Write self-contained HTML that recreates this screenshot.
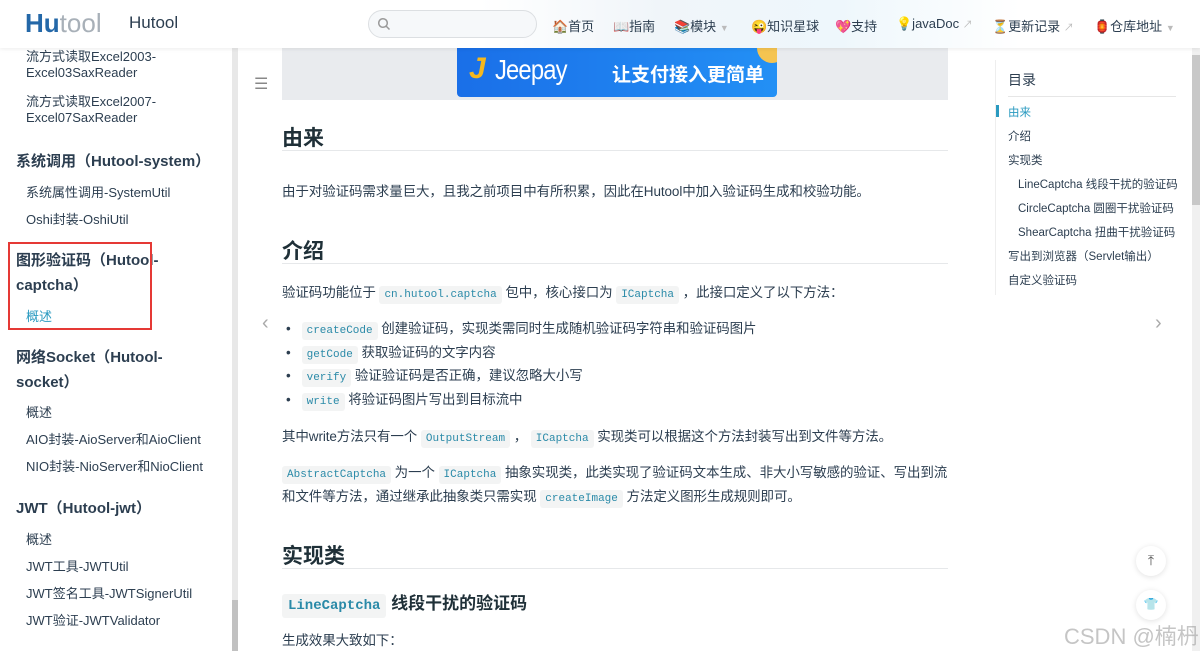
<!DOCTYPE html>
<html><head><meta charset="utf-8"><style>
*{margin:0;padding:0;box-sizing:border-box}
body{width:1200px;height:651px;overflow:hidden;background:#fff;font-family:"Liberation Sans","Noto Sans CJK SC",sans-serif;color:#2c3e50;position:relative}
.a{position:absolute;white-space:nowrap}
.s{font-size:13px;color:#2c3e50;left:26px}
.h{font-size:15px;font-weight:bold;color:#2c3e50;left:16px}
.m{font-size:13.5px;color:#2c3e50;letter-spacing:-0.1px}
code{font-family:"Liberation Mono",monospace;font-size:11px;color:#2a8aa8;background:#f3f4f4;padding:3px 5px;border-radius:3px;letter-spacing:0}
.h2{font-size:21px;font-weight:bold;color:#1f3038;left:282px}
.ln{position:absolute;left:282px;width:666px;height:1px;background:#e6e8ea}
.t{font-size:11.5px;color:#2c3e50;left:1008px}
.nav{font-size:13px;color:#2c3e50;top:16px}
</style></head><body>
<div class="a" style="left:0;top:0;width:1200px;height:48px;background:linear-gradient(90deg,#fff 0%,#fff 40%,#f0f5f9 55%,#eef7fc 70%,#fff 85%);box-shadow:0 1px 4px rgba(0,0,0,.08);z-index:5"></div>
<div class="a" style="left:25px;top:8px;font-size:26px;font-weight:bold;z-index:6"><span style="color:#2468a8">Hu</span><span style="color:#a8b0b8;font-weight:normal">tool</span></div>
<div class="a" style="left:129px;top:13px;font-size:17px;color:#2c3e50;z-index:6">Hutool</div>
<div class="a" style="left:368px;top:10px;width:169px;height:28px;border:1px solid #dcdfe2;border-radius:14px;background:#f6f8fa;z-index:6"><svg width="14" height="14" style="position:absolute;left:8px;top:6px"><circle cx="6" cy="6" r="4.3" stroke="#999" stroke-width="1.5" fill="none"/><path d="M9 9l3.5 3.5" stroke="#999" stroke-width="1.5"/></svg></div>
<div style="z-index:6;position:absolute;left:0;top:0">
<div class="a nav" style="left:552px">🏠首页</div>
<div class="a nav" style="left:613px">📖指南</div>
<div class="a nav" style="left:674px">📚模块 <span style="color:#bbb;font-size:9px">▼</span></div>
<div class="a nav" style="left:751px">😜知识星球</div>
<div class="a nav" style="left:835px">💖支持</div>
<div class="a nav" style="left:896px">💡javaDoc <span style="color:#bbb;font-size:10px">↗</span></div>
<div class="a nav" style="left:992px">⏳更新记录 <span style="color:#bbb;font-size:10px">↗</span></div>
<div class="a nav" style="left:1094px">🏮仓库地址 <span style="color:#bbb;font-size:9px">▼</span></div>
</div>
<div class="a" style="left:232px;top:0;width:6px;height:651px;background:#e8e8e8"></div>
<div class="a" style="left:232px;top:600px;width:6px;height:51px;background:#c1c1c1"></div>
<div class="a s" style="top:46px">流方式读取Excel2003-</div>
<div class="a s" style="top:65px">Excel03SaxReader</div>
<div class="a s" style="top:91px">流方式读取Excel2007-</div>
<div class="a s" style="top:110px">Excel07SaxReader</div>
<div class="a h" style="top:150px">系统调用（Hutool-system）</div>
<div class="a s" style="top:182px">系统属性调用-SystemUtil</div>
<div class="a s" style="top:209px">Oshi封装-OshiUtil</div>
<div class="a h" style="top:249px">图形验证码（Hutool-</div>
<div class="a h" style="top:274px">captcha）</div>
<div class="a s" style="top:306px;color:#2a9ac0">概述</div>
<div class="a" style="left:8px;top:242px;width:144px;height:88px;border:2px solid #e53935"></div>
<div class="a h" style="top:346px">网络Socket（Hutool-</div>
<div class="a h" style="top:371px">socket）</div>
<div class="a s" style="top:402px">概述</div>
<div class="a s" style="top:429px">AIO封装-AioServer和AioClient</div>
<div class="a s" style="top:456px">NIO封装-NioServer和NioClient</div>
<div class="a h" style="top:497px">JWT（Hutool-jwt）</div>
<div class="a s" style="top:529px">概述</div>
<div class="a s" style="top:556px">JWT工具-JWTUtil</div>
<div class="a s" style="top:583px">JWT签名工具-JWTSignerUtil</div>
<div class="a s" style="top:610px">JWT验证-JWTValidator</div>
<div class="a" style="left:254px;top:74px;font-size:16px;color:#888">☰</div>
<div class="a" style="left:282px;top:48px;width:666px;height:52px;background:#e9ebee"></div>
<div class="a" style="left:457px;top:48px;width:320px;height:49px;background:linear-gradient(90deg,#1a6fe8,#2390f5);border-radius:0 0 4px 4px;overflow:hidden">
<div class="a" style="left:12px;top:4px;font-size:30px;font-weight:bold;color:#f5b81e;font-style:italic">J</div>
<div class="a" style="left:38px;top:6px;font-size:28px;color:#fff;letter-spacing:-1px;transform:scaleX(.85);transform-origin:left">Jeepay</div>
<div class="a" style="left:155px;top:12px;font-size:19px;font-weight:bold;color:#fff">让支付接入更简单</div>
<div class="a" style="left:300px;top:-15px;width:30px;height:30px;border-radius:50%;background:#f5c451"></div>
</div>
<div class="a h2" style="top:122px">由来</div><div class="ln" style="top:150px"></div>
<div class="a m" style="left:282px;top:180px">由于对验证码需求量巨大，且我之前项目中有所积累，因此在Hutool中加入验证码生成和校验功能。</div>
<div class="a h2" style="top:235px">介绍</div><div class="ln" style="top:263px"></div>
<div class="a m" style="left:282px;top:281px">验证码功能位于 <code>cn.hutool.captcha</code> 包中，核心接口为 <code>ICaptcha</code> ，此接口定义了以下方法：</div>
<div class="a m" style="left:286px;top:317px">•&nbsp;&nbsp; <code>createCode</code> 创建验证码，实现类需同时生成随机验证码字符串和验证码图片</div>
<div class="a m" style="left:286px;top:341px">•&nbsp;&nbsp; <code>getCode</code> 获取验证码的文字内容</div>
<div class="a m" style="left:286px;top:364px">•&nbsp;&nbsp; <code>verify</code> 验证验证码是否正确，建议忽略大小写</div>
<div class="a m" style="left:286px;top:388px">•&nbsp;&nbsp; <code>write</code> 将验证码图片写出到目标流中</div>
<div class="a m" style="left:282px;top:425px">其中write方法只有一个 <code>OutputStream</code> ， <code>ICaptcha</code> 实现类可以根据这个方法封装写出到文件等方法。</div>
<div class="a m" style="left:282px;top:461px"><code>AbstractCaptcha</code> 为一个 <code>ICaptcha</code> 抽象实现类，此类实现了验证码文本生成、非大小写敏感的验证、写出到流</div>
<div class="a m" style="left:282px;top:485px">和文件等方法，通过继承此抽象类只需实现 <code>createImage</code> 方法定义图形生成规则即可。</div>
<div class="a h2" style="top:540px">实现类</div><div class="ln" style="top:568px"></div>
<div class="a" style="left:282px;top:589px;font-size:17px;font-weight:bold;color:#1f3038"><code style="font-size:14px;padding:4px 6px">LineCaptcha</code> 线段干扰的验证码</div>
<div class="a m" style="left:282px;top:629px">生成效果大致如下：</div>
<div class="a" style="left:262px;top:312px;font-size:20px;color:#aaa">‹</div>
<div class="a" style="left:1155px;top:312px;font-size:20px;color:#aaa">›</div>
<div class="a" style="left:995px;top:60px;width:1px;height:235px;background:#eee"></div>
<div class="a" style="left:1008px;top:70px;font-size:14px;color:#2c3e50">目录</div>
<div class="a" style="left:1008px;top:96px;width:168px;height:1px;background:#e6e6e6"></div>
<div class="a" style="left:996px;top:105px;width:3px;height:12px;background:#2a9ac0"></div>
<div class="a t" style="top:104px;color:#2a9ac0">由来</div>
<div class="a t" style="top:128px">介绍</div>
<div class="a t" style="top:152px">实现类</div>
<div class="a t" style="top:176px;left:1018px">LineCaptcha 线段干扰的验证码</div>
<div class="a t" style="top:200px;left:1018px">CircleCaptcha 圆圈干扰验证码</div>
<div class="a t" style="top:224px;left:1018px">ShearCaptcha 扭曲干扰验证码</div>
<div class="a t" style="top:248px">写出到浏览器（Servlet输出）</div>
<div class="a t" style="top:272px">自定义验证码</div>
<div class="a" style="left:1192px;top:0;width:8px;height:651px;background:#f0f0f0"></div>
<div class="a" style="left:1192px;top:55px;width:8px;height:150px;background:#c8c8c8"></div>
<div class="a" style="left:1136px;top:546px;width:30px;height:30px;border-radius:50%;background:#fff;box-shadow:0 1px 6px rgba(0,0,0,.12);text-align:center;line-height:28px;font-size:14px;color:#555">⤒</div>
<div class="a" style="left:1136px;top:590px;width:30px;height:30px;border-radius:50%;background:#fff;box-shadow:0 1px 6px rgba(0,0,0,.12);text-align:center;line-height:28px;font-size:12px;color:#555">👕</div>
<div class="a" style="left:1064px;top:619px;font-size:22px;color:rgba(150,150,150,.55)">CSDN @楠枬</div>
</body></html>
